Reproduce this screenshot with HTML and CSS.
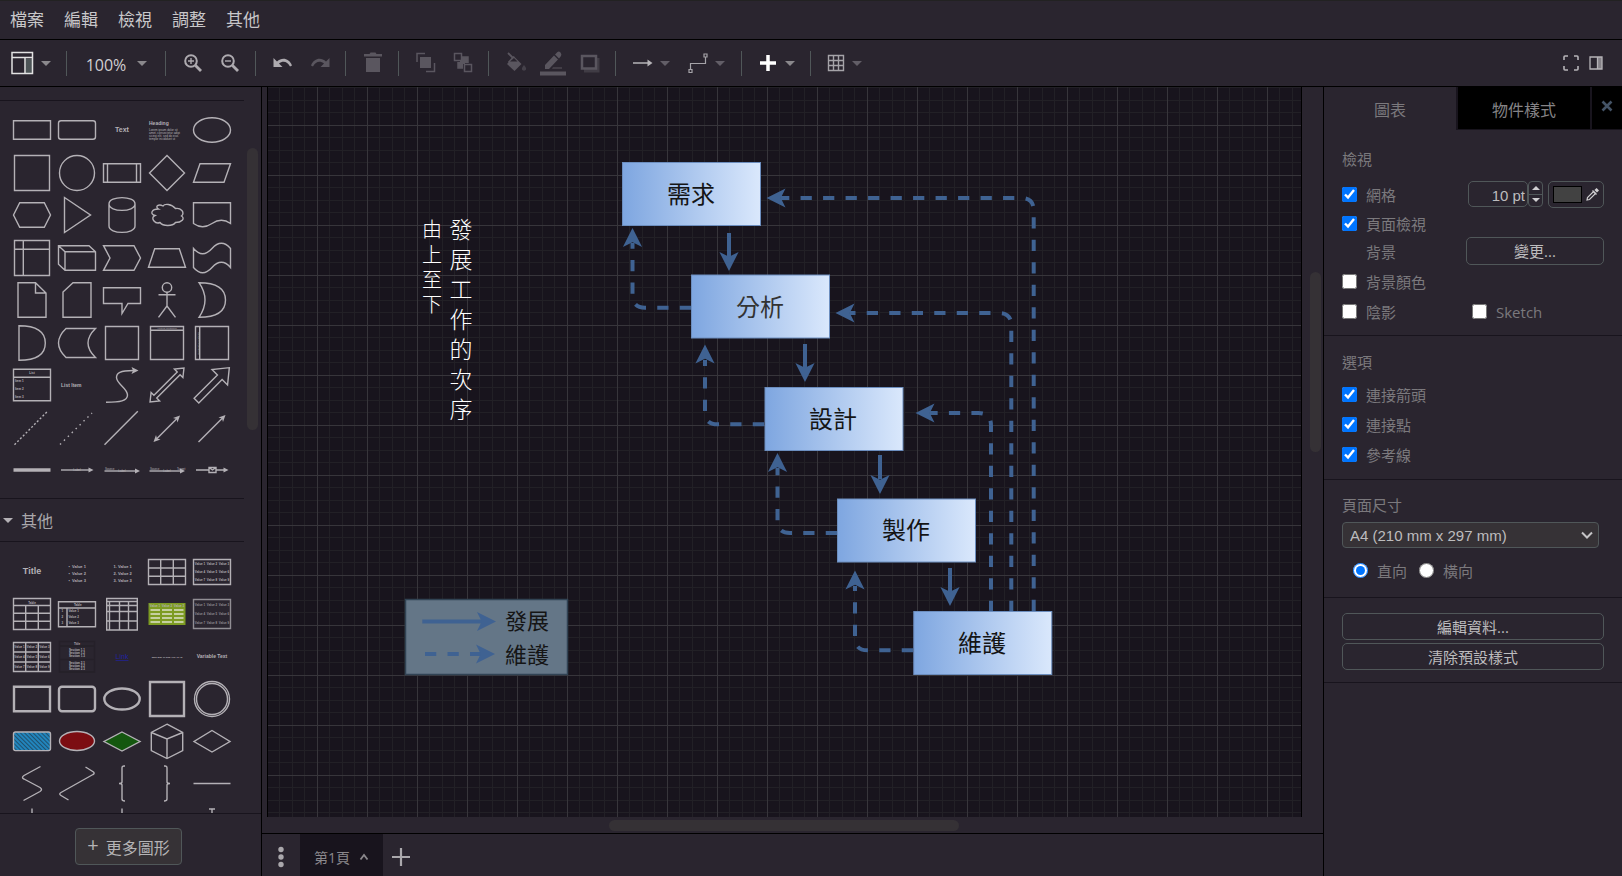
FILE: index.html
```html
<!DOCTYPE html>
<html lang="zh-Hant">
<head>
<meta charset="utf-8">
<title>流程圖編輯器</title>
<link rel="stylesheet" href="styles.css">
</head>
<body>
<nav class="menubar">
  <button class="menu">檔案</button>
  <button class="menu">編輯</button>
  <button class="menu">檢視</button>
  <button class="menu">調整</button>
  <button class="menu">其他</button>
</nav>

<div class="toolbar">
  <button class="tool tool-layout" aria-label="版面"><svg width="23" height="24" viewBox="0 0 23 24"><path d="M14.5 8V22H21V8Z" fill="#4d5557"/><path d="M1 1.500H21.500V22.500H1ZM1 6.500H21.500M14 6.500V22.500" fill="none" stroke="#e2e2e2" stroke-width="1.500"/></svg><span class="caret"></span></button>
  <span class="sep"></span>
  <button class="tool tool-zoom"><span class="zoom-level">100%</span><span class="caret"></span></button>
  <span class="sep"></span>
  <button class="tool" aria-label="放大"><svg width="20" height="20" viewBox="0 0 20 20" fill="none" stroke="#aeabb0"><circle cx="8" cy="8" r="5.800" stroke-width="2"/><path d="M12.500 12.500L18 18" stroke-width="2.800"/><path d="M5 8H11M8 5V11" stroke-width="1.400"/></svg></button>
  <button class="tool" aria-label="縮小"><svg width="20" height="20" viewBox="0 0 20 20" fill="none" stroke="#aeabb0"><circle cx="8" cy="8" r="5.800" stroke-width="2"/><path d="M12.500 12.500L18 18" stroke-width="2.800"/><path d="M5 8H11" stroke-width="1.400"/></svg></button>
  <span class="sep"></span>
  <button class="tool" aria-label="復原"><svg width="20" height="20" viewBox="0 0 20 20" fill="#aeabb0"><path d="M.500 5V14H9.500L6 10.500C9.500 7.500 14.500 8 17 13.500L19 12.500C16 5 9 4 4 8.500Z"/></svg></button>
  <button class="tool dim" aria-label="重做"><svg width="20" height="20" viewBox="0 0 20 20" fill="#5a565f"><path d="M19.500 5V14H10.500L14 10.500C10.500 7.500 5.500 8 3 13.500L1 12.500C4 5 11 4 16 8.500Z"/></svg></button>
  <span class="sep"></span>
  <button class="tool dim" aria-label="刪除"><svg width="20" height="22" viewBox="0 0 20 22" fill="#5a565f"><path d="M1 2H6.500L7.500 .500H12.500L13.500 2H19V4.500H1ZM3 6H17V20H3Z"/></svg></button>
  <span class="sep"></span>
  <button class="tool dim" aria-label="移至最前"><svg width="20" height="22" viewBox="0 0 20 22"><path d="M4 5H15V16H4Z" fill="#5a565f"/><path d="M1 10V1.500H9M10 19.500H18.500V11" stroke="#5a565f" stroke-width="1.500" fill="none"/></svg></button>
  <button class="tool dim" aria-label="移至最後"><svg width="20" height="22" viewBox="0 0 20 22"><path d="M9 5H15V11H9ZM5 10H10V16H5Z" fill="#5a565f"/><path d="M1.500 1.500H8.500V8.500H1.500ZM11.500 12.500H18.500V19.500H11.500ZM9 5H15V11M5 10V16H10" stroke="#5a565f" stroke-width="1.500" fill="none"/><path d="M7 9H12V12H10V15H7Z" fill="#5a565f"/></svg></button>
  <span class="sep"></span>
  <button class="tool dim" aria-label="填滿"><svg width="22" height="22" viewBox="0 0 22 22"><path d="M9 4.500L16.500 12 9.500 19 2 12Z" fill="#5a565f"/><path d="M3 1L9.500 7.500M9 4.500L3.500 10.500" stroke="#5a565f" stroke-width="1.800"/><path d="M5 9.500L9 6 12.500 9.500Z" fill="#2a252f"/><path d="M19 13C20.500 15 21.500 16 21 17.500 20.500 19 17.500 19 17 17.500 16.500 16 17.500 15 19 13Z" fill="#45414a"/></svg></button>
  <button class="tool dim" aria-label="線條顏色"><svg width="26" height="26" viewBox="0 0 26 26" fill="#5a565f"><path d="M5 19V15L14 5.500 18 9.500 9 19ZM15 4.500L17.500 2Q19 1 20.500 2.500T21 6L19 8.500ZM13 17.500H22V18.500H12ZM0 21.500H26V25.500H0Z"/></svg></button>
  <button class="tool dim" aria-label="陰影"><svg width="20" height="20" viewBox="0 0 20 20"><path d="M4 5H19.500V19.500H4Z" fill="#403c45"/><path d="M2 3H16V15.500H2Z" fill="#2a252f" stroke="#5a565f" stroke-width="2.500"/></svg></button>
  <span class="sep"></span>
  <button class="tool tool-drop" aria-label="連接"><svg width="20" height="20" viewBox="0 0 20 20"><path d="M0 10H16" stroke="#b6b4b8" stroke-width="1.500"/><path d="M14.500 6.500L19.500 10 14.500 13.500Z" fill="#b6b4b8"/></svg><span class="caret caret-dim"></span></button>
  <button class="tool tool-drop" aria-label="航點"><svg width="20" height="22" viewBox="0 0 20 22" fill="none" stroke="#a5a3a8" stroke-width="1.200"><path d="M2.500 17.500V11.500H17.500V5"/><path d="M1 17.500H4V20.500H1ZM16 2H19V5H16Z"/></svg><span class="caret caret-dim"></span></button>
  <span class="sep"></span>
  <button class="tool tool-insert" aria-label="插入"><svg width="20" height="20" viewBox="0 0 20 20"><path d="M2 10H18M10 2V18" stroke="#fff" stroke-width="3.500"/></svg><span class="caret"></span></button>
  <span class="sep"></span>
  <button class="tool tool-table" aria-label="表格"><svg width="18" height="18" viewBox="0 0 18 18" fill="none" stroke="#a5a3a8" stroke-width="1.400"><path d="M1.500 1.500H16.500V16.500H1.500ZM1.500 6.500H16.500M1.500 11.500H16.500M6.500 1.500V16.500M11.500 1.500V16.500"/></svg><span class="caret caret-dim"></span></button>
  <span class="spacer"></span>
  <button class="tool tool-end" aria-label="全螢幕"><svg width="16" height="16" viewBox="0 0 16 16" fill="none" stroke="#b6b4b8" stroke-width="1.600"><path d="M1 5V2Q1 1 2 1H5M11 1H14Q15 1 15 2V5M15 11V14Q15 15 14 15H11M5 15H2Q1 15 1 14V11"/></svg></button>
  <button class="tool tool-end" aria-label="格式"><svg width="14" height="14" viewBox="0 0 14 14"><path d="M9 1H13V13H9Z" fill="#858288"/><path d="M1 1H13V13H1ZM8.500 1V13" fill="none" stroke="#b6b4b8" stroke-width="1.300"/></svg></button>
</div>

<main class="main">
<section class="sidebar">
  <div class="palette">
    <div class="shapes shapes-general">
      <a href="#" class="shape" aria-label="Rectangle"><svg viewBox="-22 -21 44 42"><path d="M-18.500-9.300H18.500V9.300H-18.500Z"/></svg></a>
      <a href="#" class="shape" aria-label="Rounded"><svg viewBox="-22 -21 44 42"><rect x="-18.500" y="-9.300" width="37" height="18.600" rx="2.500"/></svg></a>
      <a href="#" class="shape" aria-label="Text"><svg viewBox="-22 -21 44 42"><text y="2" class="mid b t7">Text</text></svg></a>
      <a href="#" class="shape" aria-label="Textbox"><svg viewBox="-22 -21 44 42"><text x="-18" y="-5" class="b t5">Heading</text><text x="-18" y="1" class="t3">Lorem ipsum dolor sit</text><text x="-18" y="4" class="t3">amet, consectetur adipi</text><text x="-18" y="7" class="t3">sicing elit, sed do eius</text><text x="-18" y="10" class="t3">tempor incididunt ut</text></svg></a>
      <a href="#" class="shape" aria-label="Ellipse"><svg viewBox="-22 -21 44 42"><ellipse rx="18.500" ry="12.300"/></svg></a>

      <a href="#" class="shape" aria-label="Square"><svg viewBox="-22 -21 44 42"><path d="M-17.500-17.500H17.500V17.500H-17.500Z"/></svg></a>
      <a href="#" class="shape" aria-label="Circle"><svg viewBox="-22 -21 44 42"><circle r="17.500"/></svg></a>
      <a href="#" class="shape" aria-label="Process"><svg viewBox="-22 -21 44 42"><path d="M-18.500-9.300H18.500V9.300H-18.500ZM-14.500-9.300V9.300M14.500-9.300V9.300"/></svg></a>
      <a href="#" class="shape" aria-label="Diamond"><svg viewBox="-22 -21 44 42"><path d="M0-17.500L17.500 0 0 17.500-17.500 0Z"/></svg></a>
      <a href="#" class="shape" aria-label="Parallelogram"><svg viewBox="-22 -21 44 42"><path d="M-18.500 9.300L-12-9.300H18.500L12 9.300Z"/></svg></a>

      <a href="#" class="shape" aria-label="Hexagon"><svg viewBox="-22 -21 44 42"><path d="M-18.500 0L-12.300-12.300H12.300L18.500 0 12.300 12.300H-12.300Z"/></svg></a>
      <a href="#" class="shape" aria-label="Triangle"><svg viewBox="-22 -21 44 42"><path d="M-12.500-17.500L13.500 0-12.500 17.500Z"/></svg></a>
      <a href="#" class="shape" aria-label="Cylinder"><svg viewBox="-22 -21 44 42"><path d="M-13-11C-13-19.500 13-19.500 13-11V11C13 19.500-13 19.500-13 11ZM-13-11C-13-2.500 13-2.500 13-11"/></svg></a>
      <a href="#" class="shape" aria-label="Cloud"><svg viewBox="-22 -21 44 42"><path d="M-9-5.500C-16-5.500-18-.500-12.500 1-18 3.500-12 10-7.500 8-4.500 12 5 12 8 8 14 8 18 4 14 1.500 18-2 13-7 8-6 4-11-3-11-4.500-8.500-9-11-13-8-9-5.500Z" transform="translate(.5 -.5)"/></svg></a>
      <a href="#" class="shape" aria-label="Document"><svg viewBox="-22 -21 44 42"><path d="M-18.500-12.300H18.500V8.500Q9.500 2 0 8.500T-18.500 8.500Z"/></svg></a>

      <a href="#" class="shape" aria-label="Internal Storage"><svg viewBox="-22 -21 44 42"><path d="M-17.500-17.500H17.500V17.500H-17.500ZM-17.500-8.700H17.500M-8.700-17.500V17.500"/></svg></a>
      <a href="#" class="shape" aria-label="Cube"><svg viewBox="-22 -21 44 42"><path d="M-18.500-12.300H12L18.500-6.300V12.300H-12L-18.500 6.300ZM-12 12.300V-6.300H18.500M-12-6.300L-18.500-12.300"/></svg></a>
      <a href="#" class="shape" aria-label="Step"><svg viewBox="-22 -21 44 42"><path d="M-18.500-12.300H12L18.500 0 12 12.300H-18.500L-12 0Z"/></svg></a>
      <a href="#" class="shape" aria-label="Trapezoid"><svg viewBox="-22 -21 44 42"><path d="M-18.500 9.300L-12.300-9.300H12.300L18.500 9.300Z"/></svg></a>
      <a href="#" class="shape" aria-label="Tape"><svg viewBox="-22 -21 44 42"><path d="M-18.500-9.500Q-9.500 1 0-9.500T18.500-9.500V9.500Q9.500-1 0 9.500T-18.500 9.500Z"/></svg></a>

      <a href="#" class="shape" aria-label="Note"><svg viewBox="-22 -21 44 42"><path d="M-14-17.300H3.500L14-7V17.300H-14ZM3.500-17.300V-7H14"/></svg></a>
      <a href="#" class="shape" aria-label="Card"><svg viewBox="-22 -21 44 42"><path d="M-4-17.300H14V17.300H-14V-8Z"/></svg></a>
      <a href="#" class="shape" aria-label="Callout"><svg viewBox="-22 -21 44 42"><path d="M-18.500-12.300H18.500V3.500H6L0 13.500V3.500H-18.500Z"/></svg></a>
      <a href="#" class="shape" aria-label="Actor"><svg viewBox="-22 -21 44 42"><circle cy="-12.500" r="4.700"/><path d="M0-8V6M-8.500-5.300H8.500M-8.500 17.300L0 6 8.500 17.300"/></svg></a>
      <a href="#" class="shape" aria-label="Or"><svg viewBox="-22 -21 44 42"><path d="M-13-17.300Q13.500-17.300 13.500 0T-13 17.300Q-1 0-13-17.300Z"/></svg></a>

      <a href="#" class="shape" aria-label="And"><svg viewBox="-22 -21 44 42"><path d="M-13-17.300Q13.300-17.300 13.300 0T-13 17.300Z"/></svg></a>
      <a href="#" class="shape" aria-label="Data Storage"><svg viewBox="-22 -21 44 42"><path d="M-11-14.500H18.500Q3.500 0 18.500 14.500H-11Q-26 0-11-14.500Z"/></svg></a>
      <a href="#" class="shape" aria-label="Container"><svg viewBox="-22 -21 44 42"><path d="M-16.500-16.500H16.500V16.500H-16.500Z"/></svg></a>
      <a href="#" class="shape" aria-label="Titled Container"><svg viewBox="-22 -21 44 42"><path d="M-16.500-16.500H16.500V16.500H-16.500ZM-16.500-12.800H16.500"/><text y="-13.800" class="mid t2">Vertical Container</text></svg></a>
      <a href="#" class="shape" aria-label="Horizontal Container"><svg viewBox="-22 -21 44 42"><path d="M-16.500-16.500H16.500V16.500H-16.500ZM-12.300-16.500V16.500"/><text transform="rotate(-90)" y="-13.500" class="mid t2">Horizontal Container</text></svg></a>

      <a href="#" class="shape" aria-label="List"><svg viewBox="-22 -21 44 42"><path d="M-18.500-15.800H18.500V15.800H-18.500ZM-18.500-7.700H18.500"/><text y="-11" class="mid b t3">List</text><text x="-17" y="-3" class="b t3">Item 1</text><text x="-17" y="5" class="b t3">Item 2</text><text x="-17" y="13" class="b t3">Item 3</text></svg></a>
      <a href="#" class="shape" aria-label="List Item"><svg viewBox="-22 -21 44 42"><text x="-16" y="2" class="b t5">List Item</text></svg></a>
      <a href="#" class="shape" aria-label="Curve"><svg viewBox="-22 -21 44 42"><path d="M-16 17.300C-2 17.300 5.500 16 5.500 10 5.500 3-5.500-1-5.500-7.500-5.500-12-2-14.500 11-14.500"/><path class="f" d="M16.500-14.500L9.500-18 11-14.500 9.500-11Z"/></svg></a>
      <a href="#" class="shape" aria-label="Bidirectional Arrow"><svg viewBox="-22 -21 44 42"><path transform="rotate(-45)" d="M-24-0L-16.500-6V-2H16.500V-6L24 0 16.500 6V2H-16.500V6Z"/></svg></a>
      <a href="#" class="shape" aria-label="Arrow"><svg viewBox="-22 -21 44 42"><path transform="rotate(-45)" d="M-22-3.300H11V-11L24.500 0 11 11V3.300H-22Z"/></svg></a>

      <a href="#" class="shape" aria-label="Dashed Line"><svg viewBox="-22 -21 44 42"><path stroke-dasharray="2 2" d="M-17.500 16.700L15.500-16.700"/></svg></a>
      <a href="#" class="shape" aria-label="Dotted Line"><svg viewBox="-22 -21 44 42"><path stroke-dasharray="1.500 4" d="M-17 16.500L15-15"/></svg></a>
      <a href="#" class="shape" aria-label="Line"><svg viewBox="-22 -21 44 42"><path d="M-17.500 16.700L15.800-16.700"/></svg></a>
      <a href="#" class="shape" aria-label="Bidirectional Connector"><svg viewBox="-22 -21 44 42"><path d="M-10.500 11L10.500-10"/><path class="f" d="M13-12.500L10.500-5.500 9.500-9 6-10ZM-13.500 14L-11 7-10 10.500-6.500 11.500Z"/></svg></a>
      <a href="#" class="shape" aria-label="Directional Connector"><svg viewBox="-22 -21 44 42"><path d="M-13.500 14L10.500-10"/><path class="f" d="M13.500-13L11-6 10-9.500 6.500-10.500Z"/></svg></a>

      <a href="#" class="shape" aria-label="Link"><svg viewBox="-22 -21 44 42"><path class="bar" d="M-18.500 0H18.500"/></svg></a>
      <a href="#" class="shape" aria-label="Connector with Label"><svg viewBox="-22 -21 44 42"><path d="M-16 0H13"/><path class="f" d="M16.500 0L11.500-2.500V2.500Z"/><text y="1" class="mid t3">Label</text></svg></a>
      <a href="#" class="shape" aria-label="Connector with 2 Labels"><svg viewBox="-22 -21 44 42"><path d="M-17.500 1H14"/><path class="f" d="M18 1L13-1.500V3.500Z"/><text x="-17" y="-.500" class="t3">Source</text><text y="1.500" class="mid t3">Label</text></svg></a>
      <a href="#" class="shape" aria-label="Connector with 3 Labels"><svg viewBox="-22 -21 44 42"><path d="M-17.500 1H14"/><path class="f" d="M18 1L13-1.500V3.500Z"/><text x="-17" y="-.500" class="t3">Source</text><text y="1.500" class="mid t3">Label</text><text x="10" y="-.500" class="t3">Target</text></svg></a>
      <a href="#" class="shape" aria-label="Connector with Symbol"><svg viewBox="-22 -21 44 42"><path d="M-16 0H-3M4 0H13M-3-2.500H4V2.500H-3ZM-3-2.500L.500 0 4-2.500"/><path class="f" d="M16.500 0L11.500-2.500V2.500Z"/></svg></a>
    </div>
    <h2 class="palette-title"><span class="caret caret-title"></span>其他</h2>
    <div class="shapes shapes-misc">
      <a href="#" class="shape" aria-label="Title"><svg viewBox="-22 -21 44 42"><text y="2.500" class="mid b t8">Title</text></svg></a>
      <a href="#" class="shape" aria-label="Unordered List"><svg viewBox="-22 -21 44 42"><text x="-8.500" y="-3" class="b t4">•&#160; Value 1</text><text x="-8.500" y="4" class="b t4">•&#160; Value 2</text><text x="-8.500" y="11" class="b t4">•&#160; Value 3</text></svg></a>
      <a href="#" class="shape" aria-label="Ordered List"><svg viewBox="-22 -21 44 42"><text x="-8.500" y="-3" class="b t4">1. Value 1</text><text x="-8.500" y="4" class="b t4">2. Value 2</text><text x="-8.500" y="11" class="b t4">3. Value 3</text></svg></a>
      <a href="#" class="shape" aria-label="Table"><svg viewBox="-22 -21 44 42"><path d="M-18.500-11.500H18.500V13.500H-18.500ZM-6.300-11.500V13.500M6.300-11.500V13.500M-18.500-3H18.500M-18.500 5.300H18.500"/></svg></a>
      <a href="#" class="shape" aria-label="Table 2"><svg viewBox="-22 -21 44 42"><path d="M-18.500-11.500H18.500V13.500H-18.500Z"/><g class="mid b t3"><text x="-12" y="-6">Value 1</text><text y="-6">Value 2</text><text x="12" y="-6">Value 3</text><text x="-12" y="2">Value 4</text><text y="2">Value 5</text><text x="12" y="2">Value 6</text><text x="-12" y="10">Value 7</text><text y="10">Value 8</text><text x="12" y="10">Value 9</text></g></svg></a>

      <a href="#" class="shape" aria-label="Table with Title"><svg viewBox="-22 -21 44 42"><path d="M-18.500-14.500H18.500V16.500H-18.500ZM-18.500-7.500H18.500M-18.500 .300H18.500M-18.500 8.300H18.500M-6.300-7.500V16.500M6.300-7.500V16.500"/><text y="-9.500" class="mid b t3">Table</text></svg></a>
      <a href="#" class="shape" aria-label="Section Table"><svg viewBox="-22 -21 44 42"><path d="M-18.500-11.300H18.500V13.700H-18.500ZM-18.500-5H18.500M-10-5V13.700"/><g class="b t3"><text x="-3" y="-7">Table</text><text x="-15.500" y="-1.500">1</text><text x="-8.500" y="-1.500">Value 1</text><text x="-15.500" y="5">2</text><text x="-8.500" y="5">Value 2</text><text x="-15.500" y="10.500">3</text><text x="-8.500" y="10.500">Value 3</text></g></svg></a>
      <a href="#" class="shape" aria-label="Cross Table"><svg viewBox="-22 -21 44 42"><path d="M-15.300-14.500H15.300V17H-15.300ZM-15.300-11.500H15.300M-15.300-7.500H15.300M-15.300-1.500H15.300M-15.300 8H15.300M-12.500-11.500V17M-2.500-11.500V17M6.500-11.500V17"/></svg></a>
      <a href="#" class="shape" aria-label="Colored Table"><svg viewBox="-22 -21 44 42"><path class="n" fill="#7d9b22" d="M-18.500-10H18.500V12H-18.500Z"/><path class="n" fill="#c5cfa0" d="M-16.500-4H-7V-2H-16.500ZM-5-4H5V-2H-5ZM7-4H16.500V-2H7ZM-16.500 0H-7V2H-16.500ZM-5 0H5V2H-5ZM7 0H16.500V2H7ZM-16.500 4H-7V6H-16.500ZM-5 4H5V6H-5ZM7 4H16.500V6H7ZM-16.500 8H-7V10H-16.500ZM-5 8H5V10H-5ZM7 8H16.500V10H7Z"/><g class="mid b t3"><text x="-12" y="-6">Value 1</text><text y="-6">Value 2</text><text x="12" y="-6">Value 3</text></g></svg></a>
      <a href="#" class="shape faded" aria-label="Table 3"><svg viewBox="-22 -21 44 42"><path d="M-18.500-13.500H18.500V15.500H-18.500Z"/><g class="mid b t3"><text x="-12" y="-7.500">Value 1</text><text y="-7.500">Value 2</text><text x="12" y="-7.500">Value 3</text><text x="-12" y="2">Value 4</text><text y="2">Value 5</text><text x="12" y="2">Value 6</text><text x="-12" y="11">Value 7</text><text y="11">Value 8</text><text x="12" y="11">Value 9</text></g></svg></a>

      <a href="#" class="shape" aria-label="HTML Table"><svg viewBox="-22 -21 44 42"><path d="M-18.500-13.500H18.500V15.500H-18.500ZM-18.500-4H18.500M-18.500 6H18.500M-6.300-13.500V15.500M6.300-13.500V15.500"/><g class="mid b t3"><text x="-12.500" y="-8">Value 1</text><text y="-8">Value 2</text><text x="12.500" y="-8">Value 3</text><text x="-12.500" y="2">Value 4</text><text y="2">Value 5</text><text x="12.500" y="2">Value 6</text><text x="-12.500" y="11.500">Value 7</text><text y="11.500">Value 8</text><text x="12.500" y="11.500">Value 9</text></g></svg></a>
      <a href="#" class="shape" aria-label="HTML List"><svg viewBox="-22 -21 44 42"><path class="shade" d="M-17.500-14.500H17.500V16H-17.500ZM-17.500-10H17.500M-17.500 3.500H17.500"/><g class="mid b t3"><text y="-11">Title</text><text y="-5">Section 1.1</text><text y="-2">Section 1.2</text><text y="1">Section 1.3</text><text y="8">Section 2.1</text><text y="11">Section 2.2</text><text y="14">Section 2.3</text></g></svg></a>
      <a href="#" class="shape" aria-label="Link text"><svg viewBox="-22 -21 44 42"><text y="3" class="mid t7 link">Link</text></svg></a>
      <a href="#" class="shape" aria-label="Timestamp"><svg viewBox="-22 -21 44 42"><text y="1.500" class="mid b t2">Mon Mar 11 2024 09:43:45</text></svg></a>
      <a href="#" class="shape" aria-label="Variable"><svg viewBox="-22 -21 44 42"><text y="2" class="mid b t5">Variable Text</text></svg></a>

      <a href="#" class="shape thick" aria-label="Fixed Rectangle"><svg viewBox="-22 -21 44 42"><path d="M-18-11.300H18V13.300H-18Z"/></svg></a>
      <a href="#" class="shape thick" aria-label="Fixed Rounded"><svg viewBox="-22 -21 44 42"><rect x="-18" y="-11.300" width="36" height="24.600" rx="3"/></svg></a>
      <a href="#" class="shape thick" aria-label="Double Ellipse"><svg viewBox="-22 -21 44 42"><ellipse cy="1" rx="17.700" ry="10.500"/></svg></a>
      <a href="#" class="shape thick" aria-label="Double Square"><svg viewBox="-22 -21 44 42"><path d="M-17-16H17V18H-17Z"/></svg></a>
      <a href="#" class="shape" aria-label="Double Circle"><svg viewBox="-22 -21 44 42"><circle cy="1" r="17.500"/><circle cy="1" r="15.500"/></svg></a>

      <a href="#" class="shape" aria-label="Rectangle Sketch"><svg viewBox="-22 -21 44 42"><defs><pattern id="hatch" width="3" height="3" patternUnits="userSpaceOnUse" patternTransform="rotate(-45)"><rect class="n" width="3" height="3" fill="#2185bd"/><rect class="n" width="1" height="3" fill="#20506e"/></pattern></defs><rect x="-18.500" y="-9" width="37" height="18.600" rx="2" fill="url(#hatch)" class="fill-own"/></svg></a>
      <a href="#" class="shape" aria-label="Ellipse Sketch"><svg viewBox="-22 -21 44 42"><ellipse rx="17.500" ry="9.500" fill="#7c0d12" class="fill-own"/></svg></a>
      <a href="#" class="shape" aria-label="Diamond Sketch"><svg viewBox="-22 -21 44 42"><path d="M0-9L18 .500 0 10-18 .500Z" fill="#14570f" class="fill-own"/></svg></a>
      <a href="#" class="shape" aria-label="Isometric Cube"><svg viewBox="-22 -21 44 42"><path d="M0-16.800L15.700-8.500V9.500L0 17.500-15.700 9.500V-8.500ZM-15.700-8.500L0-2 15.700-8.500M0-2V17.500"/></svg></a>
      <a href="#" class="shape" aria-label="Isometric Square"><svg viewBox="-22 -21 44 42"><path d="M0-10.500L18 .500 0 11-18 .500Z"/></svg></a>

      <a href="#" class="shape" aria-label="Edge 1"><svg viewBox="-22 -21 44 42"><path d="M8.500-16.500L-8-7.500Q-11-5.500-8-4L8 4.500Q11 6.500 8 8.500L-8.500 17.500"/></svg></a>
      <a href="#" class="shape" aria-label="Edge 2"><svg viewBox="-22 -21 44 42"><path d="M8.500-16L16.500-11Q18-9.500 16-8.500L-16 9.500Q-18.500 11-16 12.500L-8.500 17"/></svg></a>
      <a href="#" class="shape" aria-label="Left Brace"><svg viewBox="-22 -21 44 42"><path d="M3-17H2Q0-17 0-15V-1Q0 .500-3 .500 0 .500 0 2V16Q0 18 3 18"/></svg></a>
      <a href="#" class="shape" aria-label="Right Brace"><svg viewBox="-22 -21 44 42"><path d="M-3-17H-2Q0-17 0-15V-1Q0 .500 3 .500 0 .500 0 2V16Q0 18-3 18"/></svg></a>
      <a href="#" class="shape" aria-label="Horizontal Line"><svg viewBox="-22 -21 44 42"><path d="M-18.500 .500H18.500"/></svg></a>

      <a href="#" class="shape" aria-label="Lifeline"><svg viewBox="-22 -21 44 42"><path d="M0-17.500V10"/></svg></a>
      <span class="shape"></span>
      <a href="#" class="shape" aria-label="Vertical Line"><svg viewBox="-22 -21 44 42"><path d="M0-17.500V10"/></svg></a>
      <span class="shape"></span>
      <a href="#" class="shape" aria-label="Dimension"><svg viewBox="-22 -21 44 42"><path d="M-3-17H3M0-17V10"/></svg></a>
    </div>
    <div class="thumb thumb-palette"></div>
  </div>
  <div class="sidebar-foot"><button class="more"><span class="plus">+</span>更多圖形</button></div>
</section>

<section class="center">
  <div class="workspace">
    <div class="canvas">
      <svg class="diagram" role="img" aria-label="瀑布模型">
        <defs>
          <pattern id="grid" x="267" y="75" width="50" height="50" patternUnits="userSpaceOnUse">
            <path d="M12.500 0V50M25.500 0V50M37.500 0V50M0 12.500H50M0 25.500H50M0 37.500H50" stroke="#222026" fill="none"/>
            <path d="M.500 0V50M0 .500H50" stroke="#37353b" fill="none"/>
          </pattern>
          <linearGradient id="box"><stop offset="0" stop-color="#7ea6e0"/><stop offset="1" stop-color="#dae8fc"/></linearGradient>
          <path id="head" d="M0 0L-19-9.600-14.300 0-19 9.600Z"/>
        </defs>
        <g transform="translate(-268 -87)">
          <rect x="268" y="87" width="100%" height="100%" fill="url(#grid)"/>
          <g class="wire">
            <path d="M729 233V257M805 344V368M880 455V479M950 568V592"/>
          </g>
          <g class="wire dashed">
            <path d="M691 307.700H645Q632.500 307.700 632.500 295V243"/>
            <path d="M764 424.300H717.500Q705 424.300 705 412V360"/>
            <path d="M837 533H790Q777.500 533 777.500 520.500V468"/>
            <path d="M913 650.300H867.500Q855 650.300 855 638V586"/>
            <path d="M1033.700 611V210.500Q1033.700 198 1021 198H781"/>
            <path d="M1011.300 612V325.500Q1011.300 313 999 313H850"/>
            <path d="M991 612V425.500Q991 413 978.500 413H930"/>
          </g>
          <g class="heads">
            <use href="#head" transform="translate(729 271) rotate(90)"/>
            <use href="#head" transform="translate(805 382) rotate(90)"/>
            <use href="#head" transform="translate(880 494) rotate(90)"/>
            <use href="#head" transform="translate(950 606) rotate(90)"/>
            <use href="#head" transform="translate(632.500 228) rotate(-90)"/>
            <use href="#head" transform="translate(705 344.500) rotate(-90)"/>
            <use href="#head" transform="translate(777.500 453) rotate(-90)"/>
            <use href="#head" transform="translate(855 570.500) rotate(-90)"/>
            <use href="#head" transform="translate(766.500 198) rotate(180)"/>
            <use href="#head" transform="translate(835.500 313) rotate(180)"/>
            <use href="#head" transform="translate(915.500 413) rotate(180)"/>
          </g>
          <g class="boxes">
            <rect x="622.500" y="162.500" width="138" height="63"/>
            <rect x="691.500" y="275" width="138" height="63"/>
            <rect x="765" y="387.500" width="138" height="63"/>
            <rect x="837.500" y="499" width="138" height="63"/>
            <rect x="913.800" y="611.500" width="138" height="63"/>
          </g>
          <g class="labels">
            <text x="691" y="203">需求</text>
            <text x="760" y="316" fill="#333">分析</text>
            <text x="833" y="428">設計</text>
            <text x="906" y="539">製作</text>
            <text x="982" y="652">維護</text>
          </g>
          <rect x="405.500" y="599.500" width="162" height="75" fill="#647687" stroke="#314354" stroke-width="1.500"/>
          <path class="wire" d="M422.300 621.500H482"/>
          <path class="wire dashed" d="M425 654H481"/>
          <g class="heads"><use href="#head" transform="translate(496 621.500)"/><use href="#head" transform="translate(495 654)"/></g>
          <g class="labels legend"><text x="527" y="629">發展</text><text x="527" y="663">維護</text></g>
        </g>
      </svg>
      <div class="note note-small">由上至下</div>
      <div class="note note-large">發展工作的次序</div>
    </div>
    <div class="thumb thumb-v"></div>
    <div class="thumb thumb-h"></div>
  </div>
  <footer class="pages">
    <button class="page-menu" aria-label="頁面"><svg width="6" height="22" viewBox="0 0 6 22" fill="#aaa8ac"><circle cx="3" cy="3.500" r="2.700"/><circle cx="3" cy="11" r="2.700"/><circle cx="3" cy="18.500" r="2.700"/></svg></button>
    <button class="page-tab">第1頁<svg width="10" height="8" viewBox="0 0 10 8" fill="none" stroke="#8a888c" stroke-width="1.800"><path d="M1.500 6.500L5 2 8.500 6.500"/></svg></button>
    <button class="page-add" aria-label="插入頁面"><svg width="18" height="18" viewBox="0 0 18 18"><path d="M0 9H18M9 0V18" stroke="#aaa8ac" stroke-width="2.200"/></svg></button>
  </footer>
</section>

<aside class="format">
  <div class="tabs">
    <button class="tab active">圖表</button>
    <button class="tab">物件樣式</button>
    <button class="tab-close" aria-label="關閉"><svg width="12" height="12" viewBox="0 0 12 12"><path d="M1.500 1.500L10.500 10.500M10.500 1.500L1.500 10.500" stroke="#445366" stroke-width="2.600"/></svg></button>
  </div>
  <div class="panel panel-view">
    <h3>檢視</h3>
    <div class="row row-grid">
      <label><input type="checkbox" checked><span>網格</span></label>
      <div class="size">
        <input class="size-input" type="text" value="10 pt" aria-label="網格大小">
        <div class="spin"><button aria-label="增加"><i class="up"></i></button><button aria-label="減少"><i class="down"></i></button></div>
        <button class="color" aria-label="網格顏色"><span class="swatch"></span><svg width="13" height="14" viewBox="0 0 13 14" fill="none" stroke="#d0cfd1" stroke-width="1.200"><path d="M1 13L1.500 10.500 7.500 4.500 9.500 6.500 3.500 12.500Z"/><path d="M9.500 2L12 4.500" stroke-width="3"/><path d="M6.500 3.500L10.500 7.500"/></svg></button>
      </div>
    </div>
    <div class="row row-short"><label><input type="checkbox" checked><span>頁面檢視</span></label></div>
    <div class="row"><span class="plain">背景</span><button class="btn btn-change">變更...</button></div>
    <div class="row"><label><input type="checkbox"><span>背景顏色</span></label></div>
    <div class="row"><label class="half"><input type="checkbox"><span>陰影</span></label><label><input type="checkbox"><span>Sketch</span></label></div>
  </div>
  <div class="panel panel-options">
    <h3>選項</h3>
    <div class="row"><label><input type="checkbox" checked><span>連接箭頭</span></label></div>
    <div class="row"><label><input type="checkbox" checked><span>連接點</span></label></div>
    <div class="row"><label><input type="checkbox" checked><span>參考線</span></label></div>
  </div>
  <div class="panel panel-paper">
    <h3><label for="paper">頁面尺寸</label></h3>
    <div class="select-wrap">
      <select id="paper"><option>A4 (210 mm x 297 mm)</option></select>
      <svg width="12" height="8" viewBox="0 0 12 8" fill="none" stroke="#c5c4c6" stroke-width="2"><path d="M1 1.500L6 6.500 11 1.500"/></svg>
    </div>
    <div class="radios">
      <label><input type="radio" name="orient" checked><span>直向</span></label>
      <label><input type="radio" name="orient"><span>橫向</span></label>
    </div>
  </div>
  <div class="panel panel-actions">
    <button class="btn">編輯資料...</button>
    <button class="btn">清除預設樣式</button>
  </div>
</aside>
</main>
</body>
</html>
```

FILE: styles.css
```css
* { box-sizing: border-box; }

body {
  margin: 0;
  height: 100vh;
  display: flex;
  flex-direction: column;
  overflow: hidden;
  background: #2a252f;
  color: #c8c7c9;
  font-family: "Open Sans", "Noto Sans CJK TC", sans-serif;
  font-size: 15px;
}

button, select, input { font: inherit; color: inherit; }
button { background: none; border: 0; padding: 0; cursor: pointer; }
h2, h3 { margin: 0; font-weight: 400; }
svg { display: block; }

/* Menu bar */
.menubar {
  flex: none;
  height: 40px;
  display: flex;
  align-items: center;
  gap: 20px;
  padding: 0 10px;
  border-top: 1px solid #222222;
  border-bottom: 1px solid #000;
}
.menu { font-size: 17px; line-height: 24px; }

/* Toolbar */
.toolbar {
  flex: none;
  height: 47px;
  display: flex;
  align-items: center;
  padding: 0 14px 0 2px;
  border-bottom: 1px solid #000;
}
.tool {
  flex: none;
  width: 37px;
  height: 36px;
  display: flex;
  align-items: center;
  justify-content: center;
  gap: 7px;
}
.tool-layout { width: 57px; }
.tool-zoom { width: 83px; gap: 11px; }
.tool-drop { width: 55px; }
.tool-insert { width: 53px; }
.tool-table { width: 51px; }
.tool-end { width: 25px; }
.zoom-level { font-size: 16px; padding-top: 4px; color: #d0cfd1; }
.sep {
  flex: none;
  width: 1px;
  height: 25px;
  margin: 0 8px 0 7px;
  background: #505759;
}
.spacer { flex: 1; }
.caret {
  width: 0;
  height: 0;
  border: 5px solid transparent;
  border-top-color: #8a888c;
  border-bottom: 0;
}
.caret-dim { border-top-color: #625e67; }

/* Main area */
.main { flex: 1; min-height: 0; display: flex; }

/* Shape palette */
.sidebar {
  flex: none;
  width: 262px;
  display: flex;
  flex-direction: column;
  border-right: 1px solid #000;
}
.palette {
  position: relative;
  flex: 1;
  min-height: 0;
  overflow: hidden;
  padding: 13px 17px 0 0;
}
.shapes {
  display: grid;
  grid-template-columns: repeat(5, 45px);
  border-top: 1px solid #18141d;
  padding: 8px 0 7px 9px;
}
.shapes-general { grid-template-rows: repeat(4, 42px 43px) 42px; }
.shapes-misc { grid-template-rows: repeat(4, 43px 42px); padding-top: 7px; }
.shape { display: flex; align-items: center; justify-content: center; }
.shape svg {
  width: 44px;
  height: 42px;
  fill: none;
  stroke: #b4b1b6;
  stroke-width: 1.4;
}
.shape text {
  fill: #b4b1b6;
  stroke: none;
  font-family: "Liberation Sans", Arial, sans-serif;
}
.shape .f { fill: #b4b1b6; stroke: none; }
.shape .n { stroke: none; }
.shape .bar { stroke-width: 3.5; }
.shape .shade { stroke: #252029; }
.shape .mid { text-anchor: middle; }
.shape .b { font-weight: 700; }
.shape .t2 { font-size: 2.5px; }
.shape .t3 { font-size: 3px; }
.shape .t4 { font-size: 4px; }
.shape .t5 { font-size: 5px; }
.shape .t7 { font-size: 7px; }
.shape .t8 { font-size: 9px; }
.shape .link { fill: #2222a0; text-decoration: underline; }
.faded svg { opacity: .75; }
.thick svg { stroke-width: 2.4; }
.palette-title {
  height: 43px;
  display: flex;
  align-items: center;
  gap: 8px;
  padding-left: 3px;
  border-top: 1px solid #18141d;
  font-size: 16px;
  color: #a9a7ab;
}
.caret-title { border-top-color: #b4b1b6; }
.sidebar-foot {
  flex: none;
  height: 63px;
  display: flex;
  justify-content: center;
  align-items: flex-start;
  padding: 14px 4px 0 0;
  border-top: 1px solid #18141d;
}
.more {
  height: 37px;
  width: 107px;
  display: flex;
  align-items: center;
  justify-content: center;
  gap: 7px;
  border: 1px solid #505759;
  border-radius: 4px;
  background: #363236;
  font-size: 16px;
  color: #b4b3b5;
}
.plus { font-size: 20px; line-height: 20px; padding-bottom: 4px; }

/* Scroll thumbs */
.thumb { position: absolute; background: #353135; border-radius: 6px; }
.thumb-palette { right: 3px; top: 61px; width: 11px; height: 282px; }
.thumb-v { right: 2px; top: 185px; width: 11px; height: 180px; }
.thumb-h { left: 347px; bottom: 2px; width: 350px; height: 11px; }

/* Canvas */
.center { flex: 1; min-width: 0; display: flex; flex-direction: column; }
.workspace {
  position: relative;
  flex: 1;
  min-height: 0;
  display: flex;
  padding: 0 21px 16px 5px;
}
.canvas {
  position: relative;
  flex: 1;
  min-width: 0;
  overflow: hidden;
  border-left: 1px solid #000;
  border-right: 1px solid #000;
  background: #18141d;
}
.diagram { width: 100%; height: 100%; font-family: "Noto Sans CJK TC", sans-serif; }
.wire { fill: none; stroke: #3f6292; stroke-width: 4; }
.dashed { stroke-dasharray: 11.25 11.25; }
.heads { fill: #3f6292; }
.boxes { fill: url(#box); stroke: #6c8ebf; }
.labels { text-anchor: middle; font-size: 24px; fill: #151515; }
.legend { font-size: 22px; }
.note {
  position: absolute;
  text-align: center;
  word-break: break-all;
  color: #fff;
  font-family: "Noto Sans CJK TC", sans-serif;
  font-weight: 300;
}
.note-small { left: 153px; top: 129px; width: 22px; font-size: 20px; line-height: 25px; }
.note-large { left: 181px; top: 126px; width: 24px; font-size: 23px; line-height: 30px; }

/* Page tabs */
.pages { flex: none; height: 43px; display: flex; border-top: 1px solid #000; color: #8a888c; }
.page-menu, .page-tab, .page-add { display: flex; align-items: center; justify-content: center; padding-top: 4px; }
.page-menu { width: 38px; }
.page-tab { width: 83px; gap: 9px; background: #18141d; font-size: 14px; color: #8a888c; }
.page-add { width: 36px; }

/* Format panel */
.format { flex: none; width: 299px; border-left: 1px solid #000; color: #7b797d; }
.tabs { display: flex; height: 43px; }
.tab, .tab-close {
  background: #000;
  border-left: 2px solid #18141d;
  border-bottom: 1px solid #18141d;
  color: #858386;
}
.tab { flex: 1; font-size: 16px; padding-top: 1px; }
.tab.active { background: none; border: 0; color: #7b797d; }
.tab-close { width: 32px; display: flex; align-items: center; justify-content: center; padding-bottom: 4px; }

.panel { padding: 0 18px; border-bottom: 1px solid #18141d; }
.panel h3 { font-size: 15px; line-height: 24px; }
.panel label { display: flex; align-items: center; gap: 9px; }
.panel input[type="checkbox"], .panel input[type="radio"] {
  flex: none;
  width: 15px;
  height: 15px;
  margin: 0;
  accent-color: #0075ff;
}
.panel label span { line-height: 24px; padding-top: 2px; }
.row { display: flex; align-items: center; height: 30px; }
.half { width: 130px; }
.plain { padding-left: 24px; flex: 1; }
.btn {
  display: block;
  width: 100%;
  height: 27px;
  border: 1px solid #505759;
  border-radius: 5px;
  font-size: 15px;
  line-height: 24px;
  color: #bdbcbe;
}

.panel-view { padding-top: 17px; padding-bottom: 9px; }
.row-grid { height: 32px; margin-top: 7px; justify-content: space-between; }
.row-short { height: 26px; }
.btn-change { width: 138px; height: 28px; }
.size { display: flex; align-items: center; }
.size-input {
  width: 60px;
  height: 26px;
  padding: 2px 2px 0 0;
  border: 1px solid #505759;
  border-radius: 5px;
  background: none;
  text-align: right;
  font-family: "Liberation Sans", Arial, sans-serif;
  color: #bdbcbe;
}
.spin {
  width: 15px;
  height: 26px;
  display: flex;
  flex-direction: column;
  border: 1px solid #505759;
  border-radius: 4px;
}
.spin button { flex: 1; display: flex; align-items: center; justify-content: center; }
.spin button + button { border-top: 1px solid #505759; }
.up, .down { border: 4px solid transparent; }
.up { border-bottom-color: #d0cfd1; border-top: 0; }
.down { border-top-color: #d0cfd1; border-bottom: 0; }
.color {
  width: 56px;
  height: 27px;
  margin-left: 5px;
  display: flex;
  align-items: center;
  justify-content: center;
  gap: 4px;
  border: 1px solid #505759;
  border-radius: 5px;
}
.swatch { width: 29px; height: 17px; border: 1px solid #000; background: #424242; }

.panel-options { padding-top: 14px; padding-bottom: 10px; }
.panel-options h3 { margin-bottom: 5px; }

.panel-paper { padding-top: 13px; padding-bottom: 14px; }
.select-wrap { position: relative; margin: 5px 5px 0 0; }
select {
  display: block;
  width: 100%;
  height: 26px;
  appearance: none;
  padding: 0 24px 0 7px;
  border: 1px solid #505759;
  border-radius: 4px;
  background: #363236;
  font-family: "Liberation Sans", Arial, sans-serif;
  color: #bdbcbe;
}
.select-wrap svg { position: absolute; right: 6px; top: 9px; pointer-events: none; }
.radios { display: flex; gap: 12px; padding: 9px 0 0 11px; }
.radios span { padding-top: 6px; }

.panel-actions { padding-top: 15px; padding-bottom: 12px; display: grid; gap: 3px; }
```
